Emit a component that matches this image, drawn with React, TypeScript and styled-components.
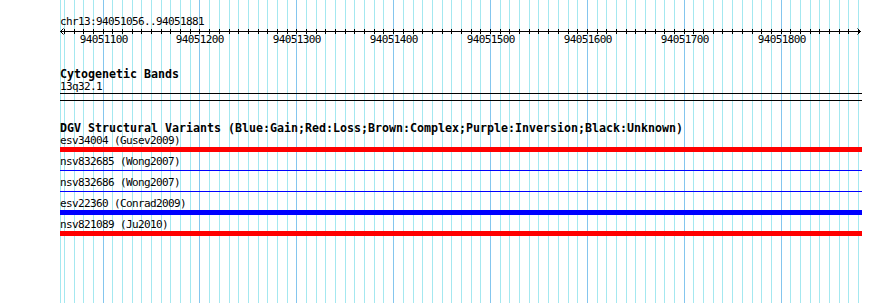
import React from 'react'
import styled, { createGlobalStyle } from 'styled-components'

const START = 94051056
const END = 94051881
const LEFT = 60
const WIDTH = 800
const STAGE_HEIGHT = 303
const MONO = "'DejaVu Sans Mono', 'Liberation Mono', monospace"

const toPx = (bp: number) => Math.round(LEFT + ((bp - START) * WIDTH) / (END - START + 1))

type Variant = { id: string; study: string; color: string; thick: boolean }

const variants: Variant[] = [
  { id: 'esv34004', study: 'Gusev2009', color: '#ff0000', thick: true },
  { id: 'nsv832685', study: 'Wong2007', color: '#0000ff', thick: false },
  { id: 'nsv832686', study: 'Wong2007', color: '#0000ff', thick: false },
  { id: 'esv22360', study: 'Conrad2009', color: '#0000ff', thick: true },
  { id: 'nsv821089', study: 'Ju2010', color: '#ff0000', thick: true },
]

const ticks: { bp: number; x: number; major: boolean }[] = []
for (let bp = 94051060; bp <= END; bp += 10) {
  ticks.push({ bp, x: toPx(bp), major: bp % 100 === 0 })
}

const GlobalStyle = createGlobalStyle`
  html, body {
    margin: 0;
    padding: 0;
    background: #ffffff;
  }
`

const Stage = styled.div`
  background: #ffffff;
  height: ${STAGE_HEIGHT}px;
  overflow: hidden;
  position: relative;
  width: 890px;
`

const GridLayer = styled.svg`
  inset: 0;
  position: absolute;
`

const Content = styled.div`
  display: flex;
  flex-direction: column;
  padding: 15px 0 0 ${LEFT}px;
  position: relative;
  width: 802px;
`

const Caption = styled.div`
  color: #000000;
  font-family: ${MONO};
  font-size: 11px;
  height: 13px;
  letter-spacing: -0.62px;
  line-height: 13px;
  white-space: pre;
`

const RulerSvg = styled.svg`
  display: block;
  margin-bottom: 22px;
  overflow: visible;
`

const Track = styled.section`
  display: flex;
  flex-direction: column;

  & + & {
    margin-top: 21px;
  }
`

const TrackTitle = styled.h3`
  color: #000000;
  font-family: ${MONO};
  font-size: 11.63px;
  font-weight: 700;
  height: 12px;
  line-height: 12px;
  margin: 0;
  padding: 0;
  white-space: pre;
`

const Band = styled.div`
  border-bottom: 1px solid #000000;
  border-top: 1px solid #000000;
  height: 6px;
`

const Lane = styled.div`
  align-items: center;
  display: flex;
  height: 5px;
  margin-bottom: 3px;
`

const Bar = styled.div<{ $color: string; $thick: boolean }>`
  background: ${({ $color }) => $color};
  height: ${({ $thick }) => ($thick ? '5px' : '1px')};
  width: 100%;
`

const Grid: React.FC = () => (
  <GridLayer width={890} height={STAGE_HEIGHT} shapeRendering="crispEdges">
    <line x1={LEFT + 0.5} x2={LEFT + 0.5} y1={0} y2={STAGE_HEIGHT} stroke="#a4e8f0" />
    {ticks.map(({ bp, x, major }) => (
      <line
        key={bp}
        x1={x + 0.5}
        x2={x + 0.5}
        y1={0}
        y2={STAGE_HEIGHT}
        stroke={major ? '#84c6ee' : '#a4e8f0'}
      />
    ))}
  </GridLayer>
)

const Ruler: React.FC = () => {
  const axisY = 3.5
  const tip = WIDTH + 0.5
  return (
    <RulerSvg width={802} height={18} shapeRendering="crispEdges">
      <line x1={0} x2={tip} y1={axisY} y2={axisY} stroke="#000" />
      <polyline
        points={`3.5,0.5 0.5,${axisY} 3.5,6.5`}
        fill="none"
        stroke="#000"
        shapeRendering="auto"
      />
      <polyline
        points={`${tip - 3},0.5 ${tip},${axisY} ${tip - 3},6.5`}
        fill="none"
        stroke="#000"
        shapeRendering="auto"
      />
      {ticks.map(({ bp, x }) => (
        <line key={bp} x1={x - LEFT + 0.5} x2={x - LEFT + 0.5} y1={1} y2={6} stroke="#000" />
      ))}
      {ticks
        .filter((t) => t.major)
        .map(({ bp, x }) => (
          <text
            key={bp}
            x={x - LEFT + 0.8}
            y={15}
            textAnchor="middle"
            fontFamily={MONO}
            fontSize={11}
            letterSpacing={-0.62}
            fill="#000"
          >
            {bp}
          </text>
        ))}
    </RulerSvg>
  )
}

const App: React.FC = () => (
  <>
    <GlobalStyle />
    <Stage>
      <Grid />
      <Content>
        <Caption>chr13:94051056..94051881</Caption>
        <Ruler />
        <Track>
          <TrackTitle>Cytogenetic Bands</TrackTitle>
          <Caption>13q32.1</Caption>
          <Band />
        </Track>
        <Track>
          <TrackTitle>
            DGV Structural Variants (Blue:Gain;Red:Loss;Brown:Complex;Purple:Inversion;Black:Unknown)
          </TrackTitle>
          {variants.map((v) => (
            <React.Fragment key={v.id}>
              <Caption>
                {v.id} ({v.study})
              </Caption>
              <Lane>
                <Bar $color={v.color} $thick={v.thick} />
              </Lane>
            </React.Fragment>
          ))}
        </Track>
      </Content>
    </Stage>
  </>
)

export default App
